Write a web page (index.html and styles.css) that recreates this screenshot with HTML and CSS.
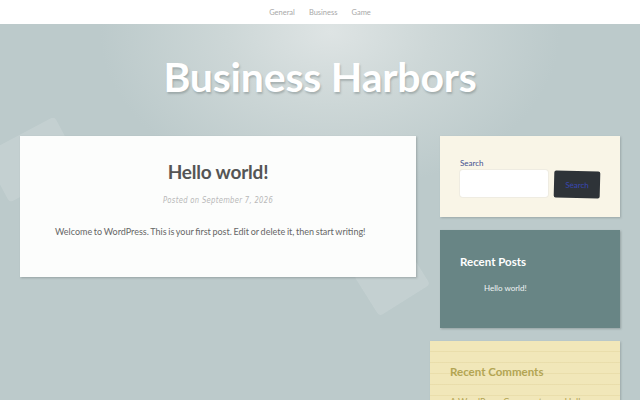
FILE: index.html
```html
<!DOCTYPE html>
<html>
<head>
<meta charset="utf-8">
<link rel="stylesheet" href="styles.css">
</head>
<body>
<nav class="topnav">
  <a href="#">General</a>
  <a href="#">Business</a>
  <a href="#">Game</a>
</nav>
<div class="page">
  <div class="deco deco-a"></div>
  <div class="deco deco-b"></div>
  <header class="masthead">
    <h1 class="site-title">Business Harbors</h1>
  </header>
  <div class="layout">
    <main class="content">
      <article class="post">
        <h2 class="post-title">Hello world!</h2>
        <div class="post-meta">Posted on September 7, 2026</div>
        <p class="post-body">Welcome to WordPress. This is your first post. Edit or delete it, then start writing!</p>
      </article>
    </main>
    <aside class="sidebar">
      <section class="widget widget-search">
        <label class="search-label">Search</label>
        <div class="search-row">
          <div class="search-input"></div>
          <div class="search-btn">Search</div>
        </div>
      </section>
      <section class="widget widget-recent">
        <h3 class="widget-title">Recent Posts</h3>
        <ul class="recent-list"><li>Hello world!</li></ul>
      </section>
      <section class="widget widget-comments">
        <h3 class="widget-title">Recent Comments</h3>
        <p class="comment-line">A WordPress Commenter on Hello world!</p>
      </section>
    </aside>
  </div>
</div>
</body>
</html>
```
FILE: styles.css
```css
html, body { margin: 0; padding: 0; }
body {
  width: 640px; height: 400px; overflow: hidden;
  font-family: Lato, "Open Sans", sans-serif;
  background: #bccacb;
}
.topnav {
  height: 24px; background: #fff;
  display: flex; justify-content: center; align-items: center; gap: 14px;
  position: relative; z-index: 2;
}
.topnav a {
  font-size: 7.5px; color: #a8a8a8; text-decoration: none;
}
.page {
  position: relative; height: 376px;
  background: radial-gradient(ellipse 230px 160px at 330px 8px, #dee4e4 0%, #cdd7d7 45%, #bccacb 100%);
  overflow: hidden;
}
.deco {
  position: absolute; background: rgba(255,255,255,0.13);
  border-radius: 4px; transform: rotate(-28deg);
}
.deco-a { left: -8px; top: 108px; width: 80px; height: 55px; }
.deco-b { left: 362px; top: 232px; width: 60px; height: 48px; transform: rotate(-32deg); }
.masthead {
  height: 112px; display: flex; justify-content: center; align-items: center;
  position: relative;
}
.site-title {
  margin: 0 0 8px; font-size: 41px; font-weight: 700; color: #fff;
  letter-spacing: -0.2px;
  text-shadow: 1px 2px 2px rgba(90,100,100,0.35);
}
.layout {
  display: flex; gap: 24px; padding: 0 20px; align-items: flex-start;
  position: relative;
}
.content { width: 396px; }
.post {
  background: #fcfdfc; height: 141px; box-sizing: border-box;
  box-shadow: 1px 1px 2px rgba(80,90,90,0.35);
  text-align: center; padding-top: 25px;
}
.post-title {
  margin: 0; font-size: 19px; font-weight: 700; color: #555;
  letter-spacing: -0.2px; line-height: 22px;
}
.post-meta {
  margin-top: 12px; font-size: 8.5px; font-style: italic; color: #b8b8b8;
  letter-spacing: 0.4px; font-family: "DejaVu Sans", sans-serif; font-weight: 300;
  transform: scaleX(0.8);
}
.post-body {
  margin: 21px 0 0; font-size: 9px; color: #666; letter-spacing: 0;
  word-spacing: -0.6px;
  text-align: left; padding-left: 35px;
}
.sidebar { width: 180px; display: flex; flex-direction: column; gap: 13px; }
.widget { box-sizing: border-box; padding: 20px; }
.widget-search {
  background: #f9f5e7; height: 81px; padding-top: 22px;
  box-shadow: 1px 1px 2px rgba(80,90,90,0.3);
}
.search-label { display: block; font-size: 8px; color: #3f4f8f; line-height: 10px; }
.search-row { display: flex; gap: 6px; margin-top: 2px; }
.search-input {
  width: 88px; height: 27px; background: #fff; border-radius: 3px;
  box-shadow: 0 0 0 1px #efece2;
}
.search-btn {
  width: 46px; height: 27px; background: #2e3338; color: #3947b5;
  font-size: 8px; display: flex; align-items: center; justify-content: center;
  border-radius: 2px; transform: rotate(1.5deg); margin-top: 1px;
}
.widget-recent {
  background: #688585; height: 98px; padding-top: 25px;
  box-shadow: 1px 1px 2px rgba(60,70,70,0.3);
}
.widget-title {
  margin: 0; font-size: 11.5px; font-weight: 700; color: #fff; line-height: 14px;
}
.recent-list {
  margin: 14px 0 0; padding-left: 24px; list-style: none;
  font-size: 8px; color: #eef3f3;
}
.widget-comments {
  margin-left: -10px; height: 80px; padding-top: 24px;
  background-color: #f1e7b9;
  background-image: repeating-linear-gradient(to bottom, transparent 0, transparent 10px, rgba(200,180,110,0.18) 10px, rgba(200,180,110,0.18) 11px);
  box-shadow: 1px 1px 2px rgba(80,90,90,0.3);
}
.widget-comments .widget-title { color: #b3a553; }
.comment-line { margin: 17px 0 0; font-size: 9px; color: #b3a553; }
```
